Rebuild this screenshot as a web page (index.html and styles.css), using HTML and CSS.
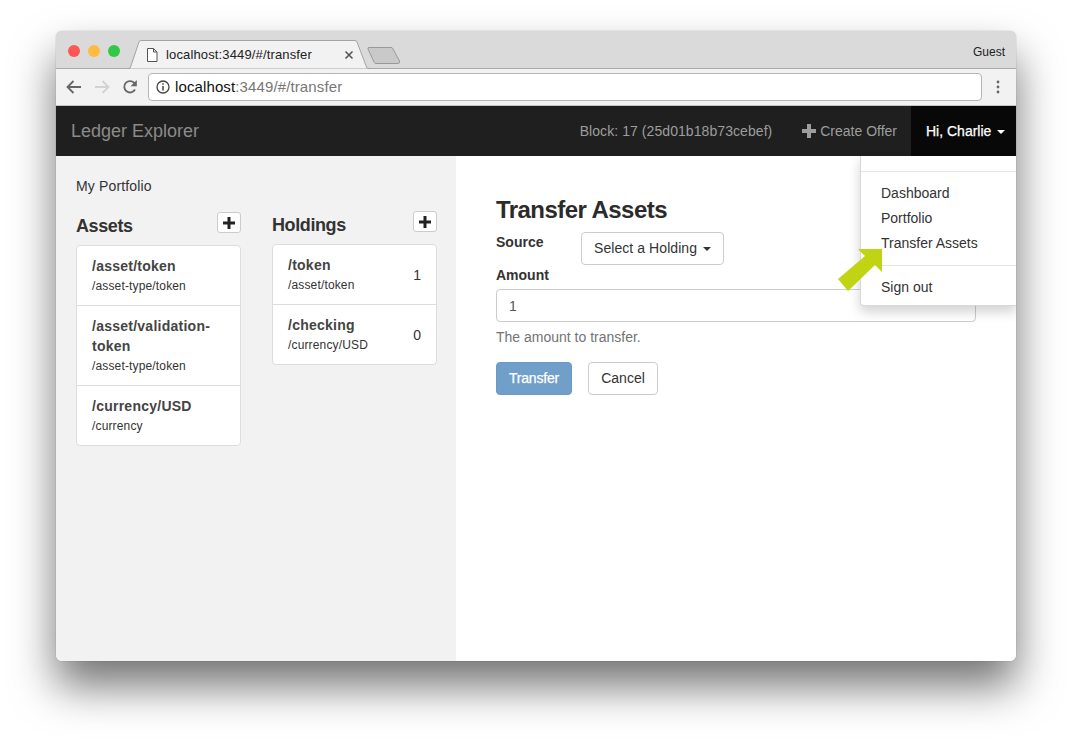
FILE: index.html
```html
<!DOCTYPE html>
<html lang="en">

<head>
    <meta charset="UTF-8">
    <meta name="viewport" content="width=device-width, initial-scale=1.0">
    <title>Ledger Explorer</title>
    <link rel="stylesheet" href="styles.css">
</head>

<body>

    <div class="window">

        <div class="tabstrip">
            <div class="lights">
                <span class="light red"></span>
                <span class="light yellow"></span>
                <span class="light green"></span>
            </div>
            <div class="tab">
                <svg class="tab-shape" width="243" height="29" viewBox="0 0 243 29">
                    <path d="M0 28.5 L1 28.5 Q2 28.5 2.5 27 L11 2 Q11.5 .5 13 .5 L227 .5 Q228.5 .5 229 2 L238.5 27 Q239 28.5 241 28.5 L243 28.5" fill="#f2f2f2" stroke="#a3a3a3"/>
                </svg>
                <svg class="tab-file" width="12" height="14" viewBox="0 0 12 14">
                    <path d="M1.5 .5 H7.5 L11 4 V13.5 H1.5 Z M7.5 .5 V4 H11" fill="#fff" stroke="#555"/>
                </svg>
                <span class="tab-title">localhost:3449/#/transfer</span>
                <svg class="tab-close" width="10" height="10" viewBox="0 0 10 10">
                    <path d="M1.5 1.5 L8.5 8.5 M8.5 1.5 L1.5 8.5" stroke="#555" stroke-width="1.6"/>
                </svg>
            </div>
            <svg class="newtab" width="34" height="17" viewBox="0 0 34 17">
                <path d="M2 .5 H24 Q25.5 .5 26 2 L32.5 14 Q33 16.5 31 16.5 H9 Q7.5 16.5 7 15 L1 2 Q.5 .5 2 .5 Z" fill="#c9c9c9" stroke="#999"/>
            </svg>
            <span class="guest">Guest</span>
        </div>

        <div class="toolbar">
            <svg class="tool" width="16" height="14" viewBox="0 0 16 14">
                <path d="M15 7 H2 M7.5 1 L1.5 7 L7.5 13" fill="none" stroke="#666" stroke-width="1.8"/>
            </svg>
            <svg class="tool" width="16" height="14" viewBox="0 0 16 14">
                <path d="M1 7 H14 M8.5 1 L14.5 7 L8.5 13" fill="none" stroke="#d2d2d2" stroke-width="1.8"/>
            </svg>
            <svg class="tool reload" width="16" height="16" viewBox="0 0 16 16">
                <path d="M13 10.5 A5.7 5.7 0 1 1 12.6 4.4" fill="none" stroke="#666" stroke-width="1.8"/>
                <path d="M14.8 1 V7.2 H8.6 Z" fill="#666"/>
            </svg>
            <div class="address">
                <svg width="14" height="14" viewBox="0 0 14 14">
                    <circle cx="7" cy="7" r="6" fill="none" stroke="#444" stroke-width="1.3"/>
                    <path d="M7 6 V10.5 M7 3.2 V4.8" stroke="#444" stroke-width="1.5"/>
                </svg>
                <span class="url">localhost<span class="url-dim">:3449/#/transfer</span></span>
            </div>
            <svg class="menu-dots" width="4" height="14" viewBox="0 0 4 14">
                <circle cx="2" cy="2" r="1.4" fill="#666"/>
                <circle cx="2" cy="7" r="1.4" fill="#666"/>
                <circle cx="2" cy="12" r="1.4" fill="#666"/>
            </svg>
        </div>

        <nav class="navbar">
            <a class="brand">Ledger Explorer</a>
            <div class="nav-right">
                <span class="nav-item block-info">Block: 17 (25d01b18b73cebef)</span>
                <span class="nav-item create-offer">
                    <svg class="plus" width="14" height="14" viewBox="0 0 14 14">
                        <path d="M5 0 H9 V5 H14 V9 H9 V14 H5 V9 H0 V5 H5 Z" fill="#9d9d9d"/>
                    </svg>
                    Create Offer
                </span>
                <div class="nav-item user">
                    Hi, Charlie <span class="caret"></span>
                    <ul class="dropdown">
                        <li class="divider"></li>
                        <li>Dashboard</li>
                        <li>Portfolio</li>
                        <li>Transfer Assets</li>
                        <li class="divider"></li>
                        <li>Sign out</li>
                    </ul>
                </div>
            </div>
        </nav>

        <div class="content">
            <aside class="sidebar">
                <div class="portfolio-title">My Portfolio</div>
                <div class="columns">
                    <section class="assets">
                        <div class="col-head">
                            <h4>Assets</h4>
                            <button class="add">
                                <svg width="12" height="12" viewBox="0 0 12 12"><path d="M4.5 0 H7.5 V4.5 H12 V7.5 H7.5 V12 H4.5 V7.5 H0 V4.5 H4.5 Z" fill="#222"/></svg>
                            </button>
                        </div>
                        <div class="list">
                            <div class="list-item">
                                <div>
                                    <div class="item-title">/asset/token</div>
                                    <div class="item-sub">/asset-type/token</div>
                                </div>
                            </div>
                            <div class="list-item">
                                <div>
                                    <div class="item-title">/asset/validation-token</div>
                                    <div class="item-sub">/asset-type/token</div>
                                </div>
                            </div>
                            <div class="list-item">
                                <div>
                                    <div class="item-title">/currency/USD</div>
                                    <div class="item-sub">/currency</div>
                                </div>
                            </div>
                        </div>
                    </section>
                    <section>
                        <div class="col-head">
                            <h4>Holdings</h4>
                            <button class="add">
                                <svg width="12" height="12" viewBox="0 0 12 12"><path d="M4.5 0 H7.5 V4.5 H12 V7.5 H7.5 V12 H4.5 V7.5 H0 V4.5 H4.5 Z" fill="#222"/></svg>
                            </button>
                        </div>
                        <div class="list">
                            <div class="list-item">
                                <div>
                                    <div class="item-title">/token</div>
                                    <div class="item-sub">/asset/token</div>
                                </div>
                                <span class="item-count">1</span>
                            </div>
                            <div class="list-item">
                                <div>
                                    <div class="item-title">/checking</div>
                                    <div class="item-sub">/currency/USD</div>
                                </div>
                                <span class="item-count">0</span>
                            </div>
                        </div>
                    </section>
                </div>
            </aside>

            <main class="main">
                <h3>Transfer Assets</h3>
                <div class="source-row">
                    <label>Source</label>
                    <button class="btn select-btn">Select a Holding <span class="caret dark"></span></button>
                </div>
                <label class="amount-label">Amount</label>
                <input class="amount" type="text" value="1">
                <p class="help">The amount to transfer.</p>
                <div class="actions">
                    <button class="btn primary">Transfer</button>
                    <button class="btn cancel">Cancel</button>
                </div>
            </main>
        </div>

        <svg class="arrow" width="46" height="45" viewBox="0 0 46 45">
            <path d="M20 1 L44 1 L44 24 L37 17 L10 43 L0 31 L27 8 Z" fill="#c1d414"/>
        </svg>
    </div>

</body>

</html>
```

FILE: styles.css
```css
body {
    margin: 0;
    padding: 31px 56px 0;
    box-sizing: border-box;
    height: 741px;
    background-color: #fff;
    font-family: "Liberation Sans", Arial, sans-serif;
    font-size: 14px;
    line-height: 20px;
    color: #333;
}

.window {
    position: relative;
    width: 960px;
    height: 630px;
    border-radius: 6px;
    overflow: hidden;
    background-color: #fff;
    box-shadow: 0 25px 44px rgba(0, 0, 0, .55), 0 0 1px rgba(0, 0, 0, .5);
}

.tabstrip {
    display: flex;
    align-items: flex-end;
    height: 37px;
    background-color: #dadada;
    border-bottom: 1px solid #a9a9a9;
}

.lights {
    display: flex;
    gap: 8px;
    align-self: flex-start;
    padding: 14px 0 0 12px;
    width: 60px;
}

.light {
    width: 12px;
    height: 12px;
    border-radius: 50%;
}

.red { background-color: #fc5753; }
.yellow { background-color: #fdbc40; }
.green { background-color: #33c748; }

.tab {
    position: relative;
    display: flex;
    align-items: center;
    width: 243px;
    height: 28px;
    margin-bottom: -1px;
    padding-left: 18px;
    box-sizing: border-box;
    flex-shrink: 0;
}

.tab-shape {
    position: absolute;
    left: 0;
    bottom: 0;
}

.tab-file {
    position: relative;
    margin-top: -1px;
}

.tab-title {
    position: relative;
    margin-left: 8px;
    margin-top: -1px;
    font-size: 13px;
    letter-spacing: .14px;
    color: #222;
}

.tab-close {
    position: relative;
    margin-left: 32px;
}

.newtab {
    margin: 0 0 4px -4px;
}

.guest {
    margin-left: auto;
    align-self: flex-start;
    padding: 11px 11px 0 0;
    font-size: 12px;
    color: #222;
}

.toolbar {
    display: flex;
    align-items: center;
    height: 36px;
    background-color: #f2f2f2;
    border-bottom: 1px solid #c4c4c4;
    padding: 0 0 0 10px;
}

.tool {
    margin-right: 12px;
    flex-shrink: 0;
}

.tool.reload {
    margin-right: 10px;
}

.address {
    display: flex;
    align-items: center;
    gap: 5px;
    width: 834px;
    height: 28px;
    box-sizing: border-box;
    padding-left: 7px;
    background-color: #fff;
    border: 1px solid #b5b5b5;
    border-radius: 4px;
    flex-shrink: 0;
}

.url {
    font-size: 15px;
    letter-spacing: .12px;
    color: #111;
}

.url-dim {
    color: #777;
}

.menu-dots {
    margin-left: 14px;
}

.navbar {
    display: flex;
    justify-content: space-between;
    height: 50px;
    background-color: #1f1f1f;
    color: #9d9d9d;
}

.brand {
    padding: 15px;
    font-size: 18px;
    color: #8b8b8b;
}

.nav-right {
    display: flex;
}

.nav-item {
    position: relative;
    padding: 15px;
    line-height: 20px;
}

.block-info {
    letter-spacing: .07px;
}

.create-offer {
    padding-right: 14px;
}

.nav-item .plus {
    vertical-align: -2px;
}

.user {
    width: 105px;
    box-sizing: border-box;
    background-color: #080808;
    color: #fff;
    white-space: nowrap;
    -webkit-text-stroke: .25px #fff;
}

.caret {
    display: inline-block;
    width: 0;
    height: 0;
    margin-left: 2px;
    vertical-align: middle;
    border-top: 4px solid #fff;
    border-left: 4px solid transparent;
    border-right: 4px solid transparent;
}

.caret.dark {
    border-top-color: #333;
}

.dropdown {
    position: absolute;
    top: 100%;
    right: 0;
    z-index: 5;
    width: 155px;
    margin: 0;
    padding: 15px 0 5px;
    list-style: none;
    background-color: #fff;
    color: #333;
    border: 1px solid rgba(0, 0, 0, .15);
    border-width: 0 0 1px 1px;
    border-radius: 0 0 0 4px;
    box-shadow: 0 6px 12px rgba(0, 0, 0, .175);
    -webkit-text-stroke: 0;
}

.dropdown li {
    height: 25px;
    line-height: 25px;
    padding-left: 20px;
}

.dropdown li.divider {
    height: 1px;
    padding: 0;
    margin-bottom: 9px;
    background-color: #e5e5e5;
}

.dropdown li + li.divider {
    margin-top: 9px;
}

.content {
    display: flex;
    height: 505px;
    background-color: #fff;
}

.sidebar {
    width: 400px;
    box-sizing: border-box;
    padding: 20px;
    background-color: #f2f2f2;
}

.portfolio-title {
    margin-bottom: 15px;
    letter-spacing: .15px;
}

.columns {
    display: grid;
    grid-template-columns: 165px 165px;
    gap: 31px;
}

.assets {
    margin-top: 1px;
}

.col-head {
    display: flex;
    justify-content: space-between;
    height: 33px;
}

h4 {
    margin: 4px 0 0;
    font-size: 18px;
    line-height: 20px;
    font-weight: bold;
    letter-spacing: -.4px;
}

.add {
    display: flex;
    align-items: center;
    justify-content: center;
    width: 24px;
    height: 21px;
    padding: 0;
    background-color: #fff;
    border: 1px solid #ccc;
    border-radius: 3px;
}

.list {
    background-color: #fff;
    border: 1px solid #ddd;
    border-radius: 4px;
}

.list-item {
    display: flex;
    align-items: center;
    justify-content: space-between;
    padding: 10px 15px 9px;
}

.list-item + .list-item {
    border-top: 1px solid #ddd;
}

.item-title {
    font-weight: bold;
    color: #444;
    letter-spacing: .25px;
}

.item-sub {
    font-size: 12px;
    letter-spacing: .15px;
}

.main {
    flex: 1;
    padding: 41px 40px 0;
}

h3 {
    margin: 0 0 9px;
    font-size: 24px;
    line-height: 26px;
    font-weight: bold;
    letter-spacing: -.55px;
    color: #2b2b2b;
}

label {
    font-weight: bold;
}

.source-row {
    display: flex;
}

.source-row label {
    width: 85px;
}

.btn {
    height: 33px;
    padding: 0 12px 1px;
    font-family: inherit;
    font-size: 14px;
    color: #333;
    background-color: #fff;
    border: 1px solid #ccc;
    border-radius: 4px;
}

.select-btn {
    letter-spacing: .07px;
}

.amount-label {
    display: block;
    margin-bottom: 4px;
}

.amount {
    display: block;
    width: 100%;
    height: 33px;
    box-sizing: border-box;
    padding: 0 12px;
    font-family: inherit;
    font-size: 14px;
    color: #555;
    border: 1px solid #ccc;
    border-radius: 4px;
}

.help {
    margin: 5px 0 15px;
    color: #737373;
}

.actions {
    display: flex;
    gap: 16px;
}

.btn.primary {
    width: 76px;
    padding-left: 0;
    padding-right: 0;
    color: #fff;
    background-color: #70a0c9;
    border-color: #6b9ac4;
    letter-spacing: -.2px;
    -webkit-text-stroke: .25px #fff;
}

.btn.cancel {
    width: 70px;
    padding-left: 0;
    padding-right: 0;
}

/* callout pointing at the menu item */
.arrow {
    position: absolute;
    left: 782px;
    top: 217px;
    z-index: 6;
}
```
